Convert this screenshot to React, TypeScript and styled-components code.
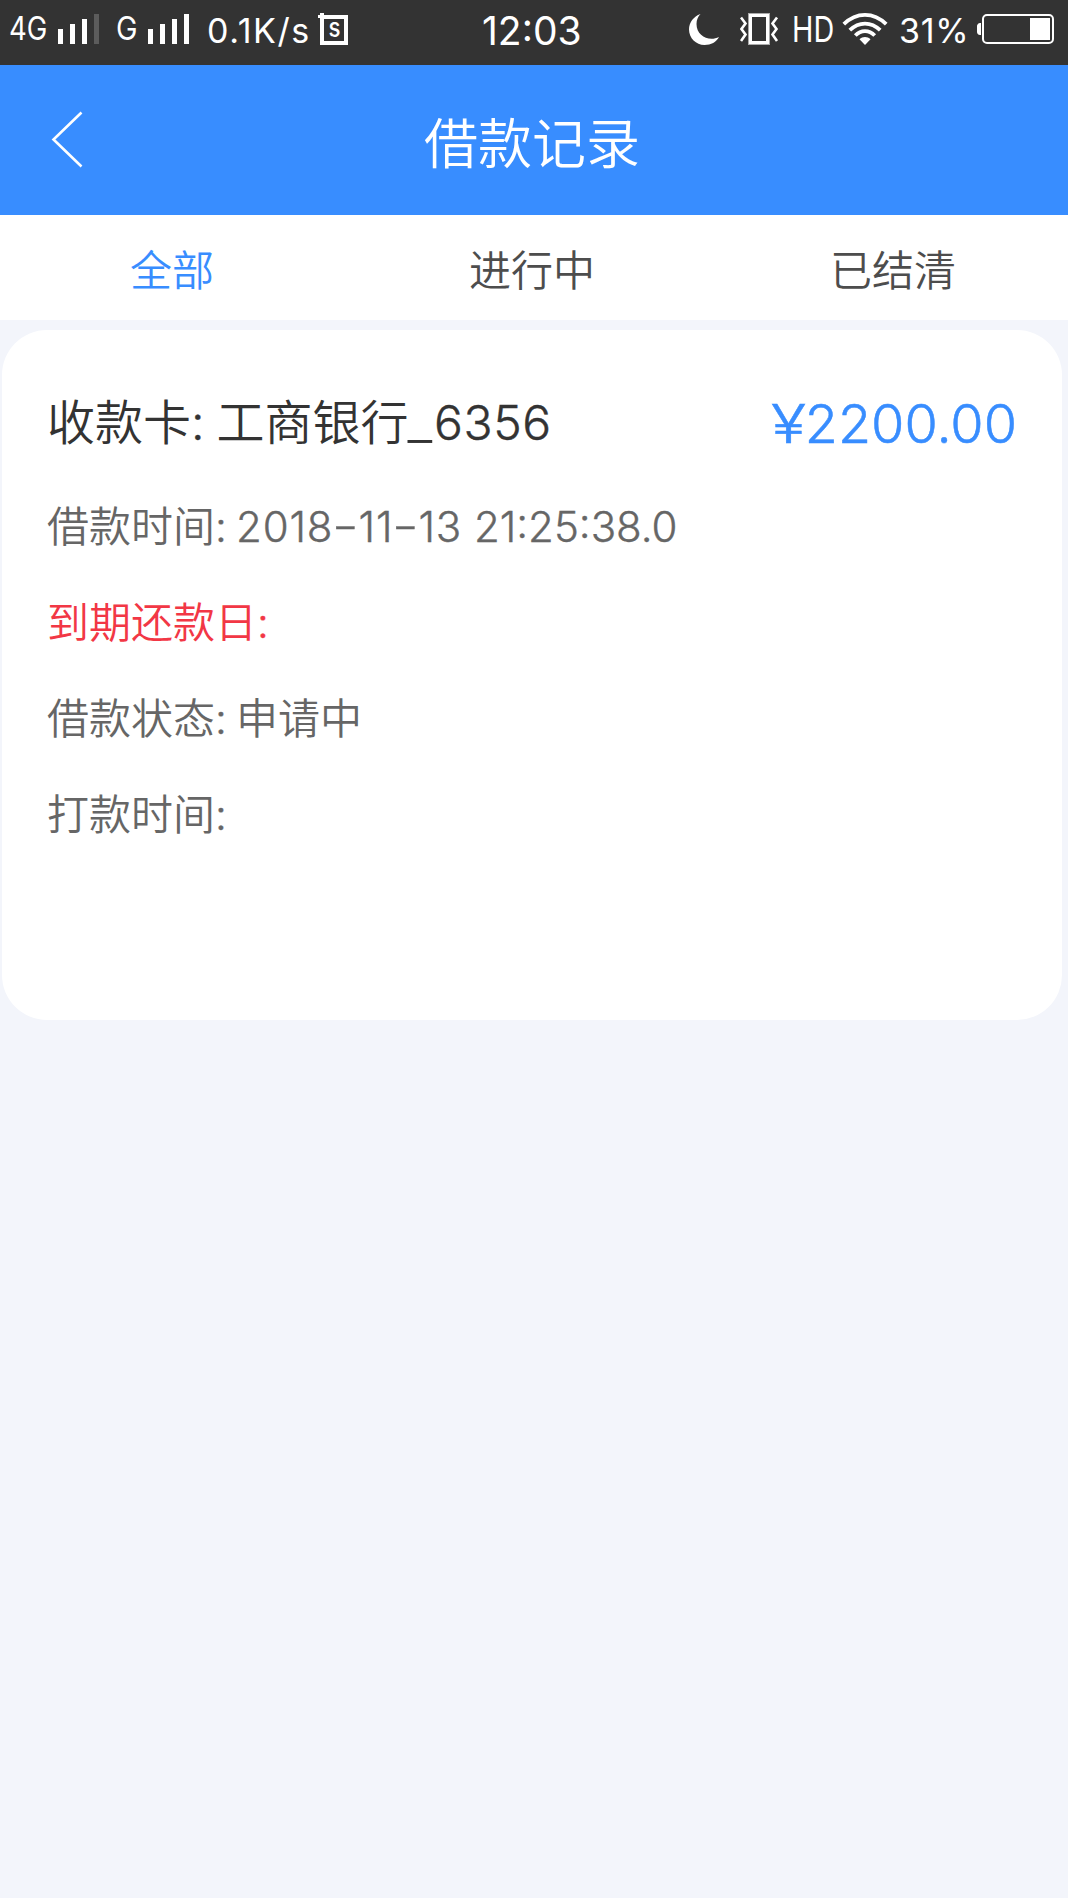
import React from "react";
import styled, { createGlobalStyle } from "styled-components";

const GlobalStyle = createGlobalStyle`
  * { box-sizing: border-box; }
  body {
    margin: 0;
    background: #f3f5fb;
    font-family: Inter, "Noto Sans CJK SC", sans-serif;
    font-weight: 350;
  }
`;

const Screen = styled.div`
  display: flex;
  flex-direction: column;
  width: 1068px;
  min-height: 1898px;
  background: #f3f5fb;
`;

const StatusBar = styled.div`
  display: flex;
  align-items: flex-start;
  height: 65px;
  padding-left: 8px;
  background: #333333;
  color: #ffffff;
  overflow: hidden;
`;

const StatusSlot = styled.div<{ $width: number; $gap?: number }>`
  flex: none;
  width: ${(p) => p.$width}px;
  margin-left: ${(p) => p.$gap ?? 0}px;
  height: 65px;
  svg { display: block; }
`;

const StatusText = styled.span<{ $size: number; $top: number; $stretch?: number; $tracking?: number }>`
  display: block;
  width: max-content;
  padding-top: ${(p) => p.$top}px;
  font-size: ${(p) => p.$size}px;
  line-height: 40px;
  font-weight: 400;
  letter-spacing: ${(p) => p.$tracking ?? 0}px;
  white-space: nowrap;
  transform: scaleX(${(p) => p.$stretch ?? 1});
  transform-origin: left;
`;

const Header = styled.header`
  display: grid;
  grid-template-columns: 120px 1fr 120px;
  align-items: center;
  height: 150px;
  padding-right: 4px;
  background: #388dff;
  color: #ffffff;
`;

const BackButton = styled.button`
  display: flex;
  padding: 0 0 3px 50px;
  border: 0;
  background: none;
`;

const Title = styled.h1`
  margin: 0;
  padding-top: 10px;
  text-align: center;
  font-size: 54px;
  line-height: 80px;
  font-weight: 350;
`;

const Tabs = styled.nav`
  display: grid;
  grid-template-columns: 344px 376px 346px;
  height: 105px;
  background: #ffffff;
`;

const Tab = styled.div<{ $active?: boolean }>`
  padding-top: 5px;
  text-align: center;
  font-size: 42px;
  line-height: 102px;
  height: 105px;
  color: ${(p) => (p.$active ? "#388dff" : "#4d4d4d")};
`;

const Card = styled.section`
  margin: 10px 6px 0 2px;
  height: 690px;
  padding: 45px 45px 0;
  border-radius: 45px;
  background: #ffffff;
`;

const CardHead = styled.div`
  display: flex;
  justify-content: space-between;
  height: 104px;
  line-height: 96px;
  color: #333333;
  font-size: 48px;
`;

const Amount = styled.span`
  padding-top: 1px;
  color: #388dff;
  font-size: 54px;
  -webkit-text-stroke: 0.5px currentColor;
`;

const Row = styled.div<{ $due?: boolean }>`
  height: 96px;
  line-height: 96px;
  font-size: 42px;
  color: ${(p) => (p.$due ? "#f23745" : "#666666")};
  white-space: pre;
`;

const Latin = styled.span<{ $tracking?: number }>`
  letter-spacing: ${(p) => p.$tracking ?? 0}px;
  -webkit-text-stroke: 0.4px currentColor;
`;

const Wide = styled.span<{ $scale: number; $before?: number; $after?: number; $lift?: number }>`
  display: inline-block;
  margin-left: ${(p) => p.$before ?? 0}px;
  margin-right: ${(p) => p.$after ?? 0}px;
  transform: translateY(${(p) => -(p.$lift ?? 0)}px) scaleX(${(p) => p.$scale});
`;

const Dash = () => <Wide $scale={1.4} $before={2.5} $after={3} $lift={1}>-</Wide>;

const Signal = ({ weak }: { weak?: boolean }) => (
  <svg width="41" height="65" viewBox="0 0 41 65" fill="#fff">
    <rect x="0" y="29" width="5" height="15" />
    <rect x="12" y="24" width="5" height="20" />
    <rect x="24" y="19" width="5" height="25" />
    <rect x="36" y="14" width="5" height="30" fill={weak ? "#5c5c5c" : "#fff"} />
  </svg>
);

const SavingIcon = () => (
  <svg width="30" height="65" viewBox="318 0 30 65">
    <path d="M322 17H346V43H322Z" fill="none" stroke="#fff" strokeWidth="4" />
    <path d="M318 15H320V13H324V18H318Z" fill="#fff" />
    <text x="334.5" y="37.4" textAnchor="middle" fontFamily="Inter" fontWeight="500" fontSize="26" textLength="12" lengthAdjust="spacingAndGlyphs" fill="#fff">s</text>
  </svg>
);

const Moon = () => (
  <svg width="30" height="65" viewBox="689 0 30 65">
    <path d="M700.5 14C693.5 16.5 689 22.5 689 29.5C689 38 696 45 704.5 45C711 45 716.5 42 719 37C709 42 696.500 36 696.500 24C696.500 20 698 16.500 700.500 14Z" fill="#fff" />
  </svg>
);

const Vibrate = () => (
  <svg width="39" height="65" viewBox="740 0 39 65" fill="none">
    <rect x="748.5" y="13.500" width="21" height="31" stroke="#aaa" strokeWidth="1" />
    <rect x="750.5" y="15.500" width="17" height="27" stroke="#fff" strokeWidth="3" />
    <path d="M741 17.500L745.500 23.500L741.500 29L745.500 34.500L741 41" stroke="#fff" strokeWidth="2.600" />
    <path d="M777 17.500L772.500 23.500L776.500 29L772.500 34.500L777 41" stroke="#fff" strokeWidth="2.600" />
  </svg>
);

const Wifi = () => (
  <svg width="46" height="65" viewBox="842 0 46 65" fill="none" stroke="#fff" strokeWidth="3.800">
    <path d="M843.800 24.200C856.500 11.800 873.500 11.800 886.200 24.200" />
    <path d="M849.800 30.200C858.800 21.300 871.200 21.300 880.200 30.200" />
    <path d="M855.300 35.500C861 29.600 869 29.600 874.700 35.500" />
    <path d="M859.500 39.300C862.500 36.200 867.500 36.200 870.500 39.300L865 45Z" fill="#fff" stroke="none" />
  </svg>
);

const Battery = () => (
  <svg width="77" height="65" viewBox="977 0 77 65">
    <rect x="983" y="15" width="70" height="28" rx="4" fill="none" stroke="#fff" strokeWidth="2" />
    <rect x="1030" y="18" width="20" height="22" fill="#fff" />
    <path d="M981 23H980C978 23 977 25 977 26V32C977 33 978 35 980 35H981Z" fill="#fff" />
  </svg>
);

export default function App() {
  return (
    <Screen>
      <GlobalStyle />
      <StatusBar>
        <StatusSlot $width={39} $gap={1}><StatusText $size={32} $top={9} $stretch={0.86}>4G</StatusText></StatusSlot>
        <StatusSlot $width={41} $gap={10}><Signal weak /></StatusSlot>
        <StatusSlot $width={22} $gap={17}><StatusText $size={32} $top={9} $stretch={0.9}>G</StatusText></StatusSlot>
        <StatusSlot $width={41} $gap={10}><Signal /></StatusSlot>
        <StatusSlot $width={102} $gap={18}><StatusText $size={34} $top={11} $tracking={1.6}>0.1K/s</StatusText></StatusSlot>
        <StatusSlot $width={30} $gap={9}><SavingIcon /></StatusSlot>
        <StatusSlot $width={100} $gap={134}><StatusText $size={39} $top={11}>12:03</StatusText></StatusSlot>
        <StatusSlot $width={30} $gap={107}><Moon /></StatusSlot>
        <StatusSlot $width={39} $gap={21}><Vibrate /></StatusSlot>
        <StatusSlot $width={44} $gap={13}><StatusText $size={36} $top={9} $stretch={0.8}>HD</StatusText></StatusSlot>
        <StatusSlot $width={46} $gap={6}><Wifi /></StatusSlot>
        <StatusSlot $width={70} $gap={11}><StatusText $size={34} $top={11} $tracking={0.7}>31%</StatusText></StatusSlot>
        <StatusSlot $width={77} $gap={8}><Battery /></StatusSlot>
      </StatusBar>
      <Header>
        <BackButton aria-label="返回">
          <svg width="34" height="58" viewBox="50 110 34 58" fill="none" stroke="#fff" strokeWidth="2.600">
            <path d="M81.500 112.500L53.500 139.500L81.500 166.500" />
          </svg>
        </BackButton>
        <Title>借款记录</Title>
      </Header>
      <Tabs>
        <Tab $active>全部</Tab>
        <Tab>进行中</Tab>
        <Tab>已结清</Tab>
      </Tabs>
      <Card>
        <CardHead>
          <span>
            收款卡<Latin $tracking={-0.8}>: </Latin>工商银行
            <Wide $scale={1.15} $before={1} $after={3}>_</Wide>
            <Latin $tracking={0.6}>6356</Latin>
          </span>
          <Amount><Wide $scale={1.2} $after={2}>¥</Wide>2200.00</Amount>
        </CardHead>
        <Row>
          借款时间<Latin $tracking={-1.3}>: </Latin>
          <Latin $tracking={0.8}>2018<Dash />11<Dash />13</Latin>
          <Latin> 21:25:38.0</Latin>
        </Row>
        <Row $due>到期还款日<Latin>:</Latin></Row>
        <Row>借款状态<Latin $tracking={-1.3}>: </Latin>申请中</Row>
        <Row>打款时间<Latin>:</Latin></Row>
      </Card>
    </Screen>
  );
}
